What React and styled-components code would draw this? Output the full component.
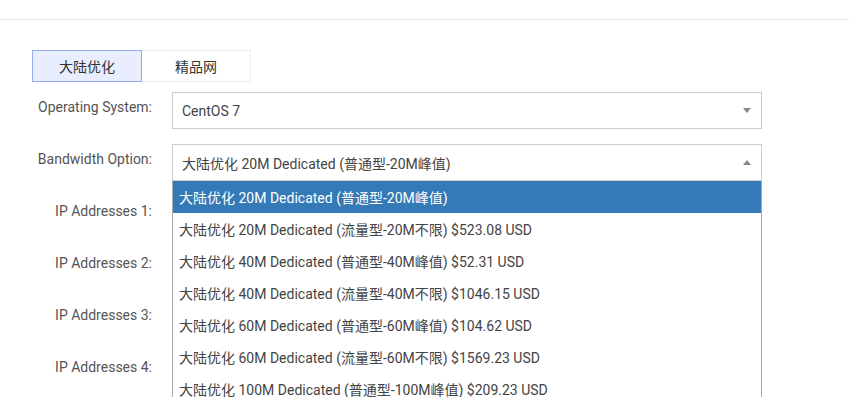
import React, { useState } from 'react'
import styled, { createGlobalStyle } from 'styled-components'

const GlobalStyle = createGlobalStyle`
  html, body {
    margin: 0;
    padding: 0;
    overflow: hidden;
    background: #fff;
  }
  body {
    font-family: Roboto, "Noto Sans CJK SC", sans-serif;
    font-size: 14px;
    color: #333;
  }
`

const tabs = ['大陆优化', '精品网']

const bandwidths = [
  '大陆优化 20M Dedicated (普通型-20M峰值)',
  '大陆优化 20M Dedicated (流量型-20M不限) $523.08 USD',
  '大陆优化 40M Dedicated (普通型-40M峰值) $52.31 USD',
  '大陆优化 40M Dedicated (流量型-40M不限) $1046.15 USD',
  '大陆优化 60M Dedicated (普通型-60M峰值) $104.62 USD',
  '大陆优化 60M Dedicated (流量型-60M不限) $1569.23 USD',
  '大陆优化 100M Dedicated (普通型-100M峰值) $209.23 USD',
  '大陆优化 100M Dedicated (流量型-100M不限) $2615.38 USD',
]

const App = () => {
  const [tab, setTab] = useState(0)
  const [open, setOpen] = useState(true)
  const [bw, setBw] = useState(0)

  return (
    <Page>
      <GlobalStyle />
      <TopBar />
      <Content>
        <Tabs>
          {tabs.map((t, i) => (
            <Tab key={t} $active={tab === i} onClick={() => setTab(i)}>{t}</Tab>
          ))}
        </Tabs>
        <Form>
          <Row>
            <Label>Operating System:</Label>
            <SelectWrap>
              <Select>
                <span>CentOS 7</span>
                <Arrow />
              </Select>
            </SelectWrap>
          </Row>
          <Row>
            <Label>Bandwidth Option:</Label>
            <SelectWrap>
              <Select onClick={() => setOpen(!open)}>
                <span>{bandwidths[bw].replace(/ \$.*$/, '')}</span>
                <Arrow $up={open} />
              </Select>
              {open && (
                <Dropdown>
                  {bandwidths.map((b, i) => (
                    <Option key={b} $selected={bw === i} onClick={() => { setBw(i); setOpen(false) }}>
                      {b}
                    </Option>
                  ))}
                </Dropdown>
              )}
            </SelectWrap>
          </Row>
          {[1, 2, 3, 4].map(n => (
            <Row key={n}>
              <Label>IP Addresses {n}:</Label>
              <SelectWrap>
                <Select>
                  <span></span>
                  <Arrow />
                </Select>
              </SelectWrap>
            </Row>
          ))}
        </Form>
      </Content>
    </Page>
  )
}

export default App

const Page = styled.div`
  width: 849px;
  height: 397px;
`
const TopBar = styled.div`
  height: 19px;
  border-bottom: 1px solid #e6e6e6;
`
const Content = styled.div`
  padding: 30px 0 0 32px;
`
const Tabs = styled.div`
  display: flex;
  margin-bottom: 10px;
`
const Tab = styled.div`
  box-sizing: border-box;
  width: ${p => (p.$active ? '110px' : '109px')};
  height: 32px;
  display: flex;
  align-items: center;
  justify-content: center;
  color: #333;
  background: ${p => (p.$active ? '#e8eefd' : '#fff')};
  border: 1px solid ${p => (p.$active ? '#93acf6' : '#ececec')};
  border-left: ${p => (p.$active ? '1px solid #93acf6' : 'none')};
  cursor: pointer;
`
const Form = styled.div`
  display: flex;
  flex-direction: column;
  gap: 15px;
`
const Row = styled.div`
  display: grid;
  grid-template-columns: 120px 590px;
  column-gap: 20px;
  height: 37px;
`
const Label = styled.div`
  text-align: right;
  color: #555;
  padding-top: 6px;
  line-height: 18px;
`
const SelectWrap = styled.div`
  position: relative;
`
const Select = styled.div`
  box-sizing: border-box;
  height: 37px;
  border: 1px solid #cccccc;
  display: flex;
  align-items: center;
  justify-content: space-between;
  padding: 0 10px 0 9px;
  color: #444;
  background: #fff;
  cursor: pointer;
`
const Arrow = styled.i`
  width: 0;
  height: 0;
  border-left: 4px solid transparent;
  border-right: 4px solid transparent;
  border-top: ${p => (p.$up ? 'none' : '5px solid #888')};
  border-bottom: ${p => (p.$up ? '5px solid #888' : 'none')};
`
const Dropdown = styled.div`
  position: absolute;
  top: 37px;
  left: 0;
  right: 0;
  z-index: 10;
  background: #fff;
  border: 1px solid #aaa;
  border-top: none;
  box-sizing: border-box;
`
const Option = styled.div`
  height: 32px;
  display: flex;
  align-items: center;
  padding: 0 6px;
  white-space: nowrap;
  color: ${p => (p.$selected ? '#fff' : '#444')};
  background: ${p => (p.$selected ? '#337ab7' : '#fff')};
  cursor: pointer;
`
